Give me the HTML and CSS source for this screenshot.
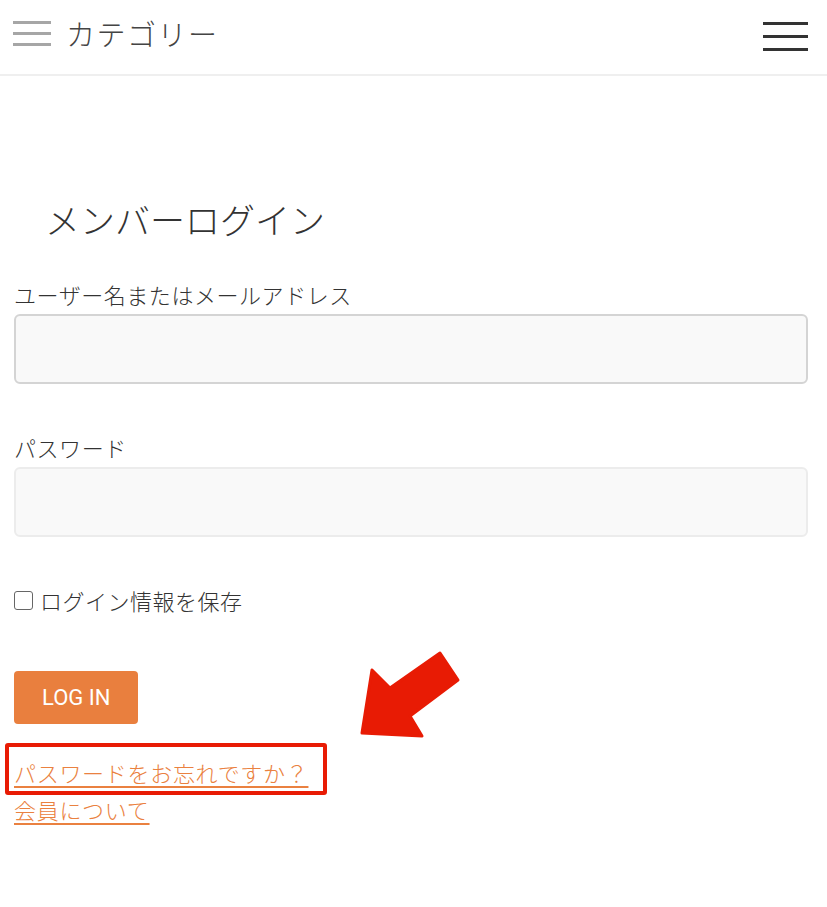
FILE: index.html
```html
<!DOCTYPE html>
<html lang="ja">
<head>
<meta charset="utf-8">
<link rel="stylesheet" href="styles.css">
</head>
<body>
<header class="top">
  <div class="cat">
    <span class="cat-icon"><i></i><i></i><i></i></span>
    <span class="cat-text">カテゴリー</span>
  </div>
  <span class="menu"><i></i><i></i><i></i></span>
</header>
<main class="content">
  <h1 class="title">メンバーログイン</h1>
  <form class="login">
    <label class="label">ユーザー名またはメールアドレス</label>
    <div class="input"></div>
    <label class="label label-gap">パスワード</label>
    <div class="input input-light"></div>
    <div class="remember"><span class="box"></span><span>ログイン情報を保存</span></div>
    <div class="btn">LOG IN</div>
  </form>
  <div class="links">
    <a class="link" href="#">パスワードをお忘れですか？</a>
    <a class="link" href="#">会員について</a>
    <span class="redbox"></span>
    <svg class="arrow" width="110" height="95" viewBox="355 650 110 95">
      <polygon points="362,735 372,672 390,690 440,655 458,682 410,718 422,738" fill="#e81b04" stroke="#e81b04" stroke-width="3" stroke-linejoin="round"/>
    </svg>
  </div>
</main>
</body>
</html>
```
FILE: styles.css
```css
* { box-sizing: border-box; }
body {
  margin: 0;
  background: #fff;
  font-family: "Noto Sans CJK JP", "Noto Sans", sans-serif;
  color: #333;
}
.top {
  height: 76px;
  border-bottom: 2px solid #efefef;
  display: flex;
  align-items: flex-start;
  justify-content: space-between;
  padding: 0 19px 0 13px;
}
.cat {
  display: flex;
  align-items: center;
  height: 66px;
}
.cat-icon {
  display: flex;
  flex-direction: column;
  gap: 8px;
  width: 38px;
  margin-right: 15px;
}
.cat-icon i {
  display: block;
  height: 3px;
  background: #a6a6a6;
}
.cat-text {
  font-size: 29px;
  color: #444;
  font-weight: 300;
  letter-spacing: 1.5px;
}
.menu {
  display: flex;
  flex-direction: column;
  gap: 10px;
  width: 45px;
  margin-top: 22px;
}
.menu i {
  display: block;
  height: 3px;
  background: #333;
}
.content {
  padding: 0 19px 0 14px;
}
.title {
  margin: 120px 0 0;
  padding-left: 31px;
  font-size: 35px;
  font-weight: 300;
  line-height: 46px;
  color: #333;
}
.login {
  display: flex;
  flex-direction: column;
  align-items: flex-start;
}
.label {
  display: block;
  font-size: 22px;
  font-weight: 300;
  letter-spacing: 0.55px;
  line-height: 33px;
  margin-top: 36px;
  color: #333;
}
.label-gap { margin-top: 47px; }
.input {
  align-self: stretch;
  height: 70px;
  margin-top: 3px;
  background: #f9f9f9;
  border: 2px solid #d4d4d4;
  border-radius: 6px;
}
.input-light { border-color: #ececec; }
.remember {
  display: flex;
  align-items: center;
  gap: 7px;
  margin-top: 47px;
  font-size: 22px;
  font-weight: 300;
  letter-spacing: 0.5px;
  line-height: 33px;
}
.box {
  width: 19px;
  height: 19px;
  border: 1.5px solid #666;
  border-radius: 3px;
  background: #fff;
}
.btn {
  margin-top: 54px;
  background: #e97f3e;
  color: #fff;
  font-family: Roboto, "Noto Sans", sans-serif;
  font-size: 22px;
  height: 53px;
  line-height: 53px;
  padding: 0 28px;
  border-radius: 4px;
}
.links {
  position: relative;
  display: flex;
  flex-direction: column;
  align-items: flex-start;
  margin-top: 30px;
}
.link {
  font-size: 22px;
  font-weight: 300;
  letter-spacing: 0.7px;
  line-height: 37px;
  color: #ea8140;
  text-decoration: underline;
  text-underline-offset: 4px;
  text-decoration-thickness: 2px;
}
.redbox {
  position: absolute;
  left: -9px;
  top: -11px;
  width: 322px;
  height: 52px;
  border: 4px solid #e81b04;
  border-radius: 3px;
}
.arrow {
  position: absolute;
  left: 341px;
  top: -106px;
}
```
